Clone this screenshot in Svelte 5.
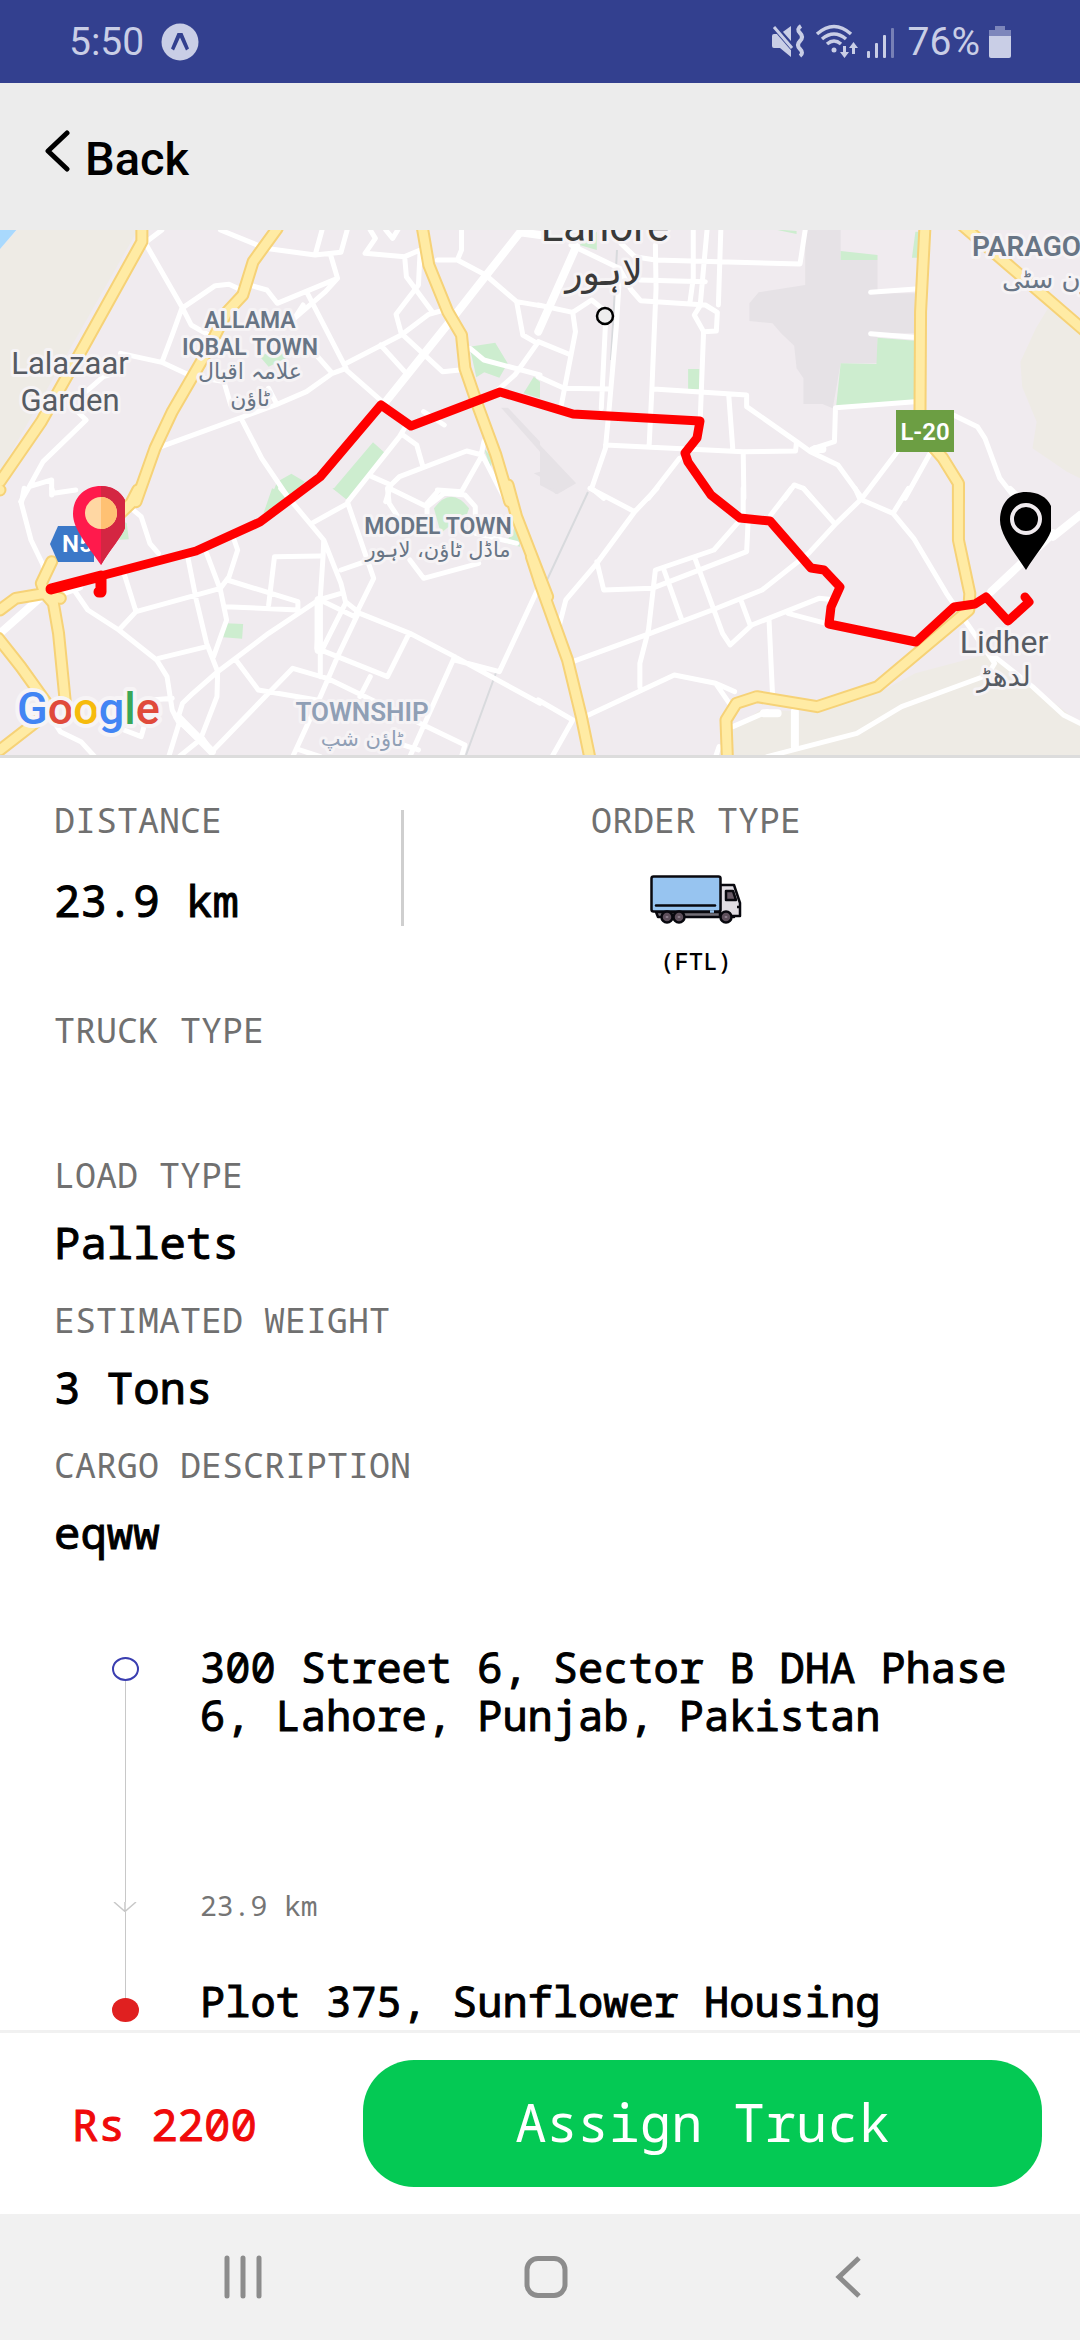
<script>
  // The map is split into four tiles; each tile keeps its shapes in its own units.
  const tiles = [
    {
      x: 0,
      y: -5,
      water: 'M0 0H60L0 72Z',
      sand: 'M50 15H400L0 740V72Z',
      built: 'M1455 548L1475 548L1568 650V680Z M1550 745L1568 740V755Z',
      park: 'M1363 365L1438 353L1474 415L1450 458L1406 442L1383 457L1372 405Z M1550 455L1568 470V520L1520 505Z M1083 652L1117 683L1013 820L968 792Z M785 820L805 770L846 746L885 770L850 820Z M755 395L810 365L830 400L780 425Z M1405 670L1430 700L1425 730Z',
      roads:
        'M425 60L528 245L555 300L640 350 M425 50L470 15 M640 15L770 70L915 90L990 82L1008 15 M915 90L935 15 M960 90L980 160L945 200L855 280 M980 160L805 235L775 195L730 182 M690 190L665 178L625 182L528 250L500 330L470 412L350 385 M470 412L560 455L650 470L670 540 M890 200L1005 430L965 445L890 500L800 540L460 668 M965 445L880 345 M1000 418L1165 330L1245 268L1290 255 M855 280L880 240 M1075 15L1090 40L1060 85L1175 95L1180 155L1255 260 M1120 15L1140 40L1155 15 M1175 95L1220 75L1215 180L1150 268L1165 325L1285 440L1335 435 M1105 360L1175 440 M1270 105L1328 105L1340 75V15 M1328 105L1410 150L1500 230L1568 242 M1500 230L1518 330L1560 355L1495 450L1440 500 M1365 370L1405 405L1568 450 M1000 430L1110 530 M250 500L300 455L350 440 M220 555L250 585L125 710L85 785L150 765V810 M85 785L60 830 M700 580L760 700L845 830 M780 490L800 530 M1180 600L1160 635L1060 765L1010 830 M1170 630L1210 660L1228 725 M1080 755L1135 780L1120 830 M1135 780L1160 755L1355 678L1400 690L1470 830 M1405 650L1395 700L1340 800L1270 795 M1290 600L1230 560',
      wide: 'M1568 30L1510 22L1405 160L1310 285L1120 530',
      major: 'M412 0V50L240 370L120 590L0 770 M805 10L735 110L705 210L660 260L590 400L500 560L450 670L395 830 M1225 0L1245 120L1300 260L1340 330L1350 430L1390 550L1440 690L1480 830'
    },
    {
      x: 540,
      y: -5,
      water: '',
      sand: 'M1475 250L1568 310V760L1530 740L1430 670L1442 590L1400 485L1395 410L1440 310Z',
      built: 'M770 15H873V105H980V205H1090V325H980V415H873L850 550L820 537H765V460L745 430L738 362L700 325L675 295L608 288V235L635 202L770 180Z M0 660L105 775L50 808L0 780Z',
      park: 'M980 338L1088 347V530L860 543L873 415L977 417Z M873 78L980 90V105H873Z M1090 20H1100V98H1080Z M430 432H463V493H430Z M115 60L165 20V75Z M675 12L745 18V27Z',
      roads:
        'M90 60L230 130L265 195L292 227L480 240L515 262L512 318L475 320L448 270L465 242L485 15 M235 55L275 95L335 105L755 117L770 15 M335 60L337 190L325 490L317 660 M445 15V160L435 235 M525 15L518 240 M290 165L480 170 M-5 240L95 262L150 225L180 250 M95 262L103 320L90 390L62 540 M90 390L-5 350 M-5 455L70 490L200 492 M190 300L178 550 M232 130L222 300L200 560L190 670L150 790L185 820 M190 660L590 680L742 678L745 650L600 545V510L330 492 M475 320L465 590 M548 510L560 675 M590 680L592 820 M745 650L785 680L865 720L935 820 M790 672L855 650L858 548L1088 530 M960 202L1090 192 M960 326L1085 337 M1200 570L1270 605L1292 640L1335 760L1380 820 M1045 670L935 820 M1130 690L1060 820 M405 700L315 820 M710 820L738 780L765 790L790 820',
      wide: 'M105 65L-5 320 M800 672L820 672',
      major: 'M1118 0L1105 260L1103 620L1170 700L1215 775V830 M1225 0L1360 120L1590 325'
    },
    {
      x: 0,
      y: 260,
      water: '',
      sand: '',
      built: '',
      park: 'M790 -5L850 20L765 70Z M965 -5L1045 -5L1005 28Z M352 90L368 100L374 148L335 150Z M655 400L706 402L703 446L648 442Z M1260 55Q1310 -15 1362 55L1350 90L1320 95L1280 130Z M1500 100L1510 170L1470 160Z',
      roads:
        'M70 -5L62 40L90 150L125 225L130 270 M150 -5L155 10L220 0 M375 50L410 80L435 160L460 190 M360 250L395 365L345 420L455 510L485 560L500 660L520 700L490 800 M215 300L255 360L345 420 M545 200L570 330L600 460L632 545L560 610L530 640L515 690 M395 365L640 295L665 260L690 180L680 150 M600 190L640 300L658 390L620 500 M460 505L600 470 M632 545L780 430L925 330L990 310 M655 350L865 360V335L660 270 M780 345L797 200L930 198 M815 -5L940 150L938 200L920 475L1125 560L1188 430 M905 100L1010 40L1085 265L1030 380L930 330 M990 240L1060 215 M940 150L990 280L1003 335L1045 370L1190 430L1320 500L1568 640 M930 330V560 M1003 340L935 480 M1040 370L980 500L930 620 M1320 510L1450 545L1565 290 M1320 500L1190 800 M685 510L750 600L920 630 M632 545L630 620L585 740L615 785 M515 690L615 785L850 535L950 565L1240 710 M1075 560L1045 620 M930 620L850 800 M870 780L930 800 M500 625L440 630L410 740L360 720 M160 700L175 725L235 755L275 800 M520 800L580 750 M1125 -5L1130 40L1155 80 M1130 -5L1240 50 M1500 160L1380 130 M1240 50L1290 10L1350 15L1380 50V80 M1190 210L1230 265L1390 220 M1240 70V40L1270 5 M1240 710L1350 765L1340 800 M1170 765L1215 780',
      wide: 'M120 320L0 430 M175 310L230 290 M515 680L615 785 M925 330L925 480',
      major: 'M400 0L380 40L350 70 M150 215L120 280L130 310L45 325L0 360 M130 310L155 340L170 430L190 640 M-5 445L60 530L150 660L0 780 M-5 0L0 0 M1475 -15L1500 80L1590 320 M120 310L175 325'
    },
    {
      x: 540,
      y: 260,
      water: '',
      sand: 'M1290 495L1360 530L1568 700V830H530L560 715L640 660L800 665L980 610L1090 550Z',
      built: 'M30 -5L70 0L45 12Z',
      park: '',
      roads:
        'M145 -5L275 65L165 220L75 330L55 410 M340 -5L275 65 M165 215L185 300L325 295L600 185L605 80 M590 -5V80L505 180L335 240L315 420L290 520V590 M360 240L410 385 M450 205L530 430L552 465L615 405L810 325L860 330 M585 335L610 405 M720 370L830 400 M95 515L320 430L500 360L645 300L780 190L860 100L930 30L915 -5 M765 -5L855 100 M730 -5L670 75 M935 30L1025 70L1070 -5 M1025 70L1085 145L1180 310L1240 400L1320 520L1300 555L1050 650L920 730L660 800 M1320 500L1430 590L1520 675L1568 700 M665 390L675 610 M130 680L390 555L510 580L565 605 M510 580L550 640 M560 710L660 665 M-5 630L95 690L35 800 M520 770L510 800 M1365 -5L1380 10',
      wide: 'M1490 130L1310 305 M1490 140L1568 75 M740 665V770 M650 670H690',
      major: 'M-25 200L0 280L80 510L120 680L150 830 M1215 -15V150L1248 310L1245 360L980 590L805 650L630 620L570 640L540 690L545 830'
    }
  ];

  const route =
    'M51 359L196 321L260 292L320 247L381 175L411 196L500 162L573 184L700 191L697 208L685 223L688 232L711 265L740 288L770 291L811 338L824 340L840 357L831 377L829 394L916 412L954 377L975 374L986 367L1008 391L1029 372L1025 367';

  const labels = [
    { x: 250, y: 98, size: 23, kind: 'area', text: 'ALLAMA' },
    { x: 250, y: 125, size: 23, kind: 'area', text: 'IQBAL TOWN' },
    { x: 250, y: 149, size: 22, kind: 'area urdu', text: 'علامہ اقبال' },
    { x: 250, y: 176, size: 22, kind: 'area urdu', text: 'ٹاؤن' },
    { x: 70, y: 144, size: 31, kind: 'town', text: 'Lalazaar' },
    { x: 70, y: 181, size: 31, kind: 'town', text: 'Garden' },
    { x: 605, y: 11, size: 42, kind: 'city', text: 'Lahore' },
    { x: 604, y: 55, size: 36, kind: 'city urdu', text: 'لاہور' },
    { x: 972, y: 26, size: 28, kind: 'area edge', text: 'PARAGON' },
    { x: 1002, y: 58, size: 26, kind: 'area urdu edge', text: 'پیراگون سٹی' },
    { x: 438, y: 304, size: 23, kind: 'area', text: 'MODEL TOWN' },
    { x: 438, y: 327, size: 21, kind: 'area urdu', text: 'ماڈل ٹاؤن، لاہور' },
    { x: 362, y: 491, size: 26, kind: 'area pale', text: 'TOWNSHIP' },
    { x: 362, y: 516, size: 21, kind: 'area pale urdu', text: 'ٹاؤن شپ' },
    { x: 1004, y: 423, size: 32, kind: 'town', text: 'Lidher' },
    { x: 1004, y: 456, size: 28, kind: 'town urdu', text: 'لدھڑ' }
  ];

  const fields = [
    { label: 'TRUCK TYPE', value: '' },
    { label: 'LOAD TYPE', value: 'Pallets' },
    { label: 'ESTIMATED WEIGHT', value: '3 Tons' },
    { label: 'CARGO DESCRIPTION', value: 'eqww' }
  ];
</script>

{#snippet layer(key, kind)}
  {#each tiles as t}
    {#if t[key]}
      <path class={kind} transform="translate({t.x} {t.y}) scale(.3444 .3333)" d={t[key]} />
    {/if}
  {/each}
{/snippet}

<div class="screen">
  <div class="status">
    <div class="group">
      <span class="clock">5:50</span>
      <svg width="38" height="38" viewBox="0 0 38 38" aria-hidden="true">
        <circle cx="19" cy="19" r="18.5" fill="#c9cee6" />
        <path d="M10 25.5 16.5 10h5L28 25.500l-3 2-6-13-6 13Z" fill="#33408f" />
      </svg>
    </div>
    <div class="group right">
      <svg width="124" height="36" viewBox="0 0 124 36" fill="#c9cee6" aria-hidden="true">
        <path d="M1 12q0-2 2-2h6l11-8v31L9 24H3q-2 0-2-2Z" />
        <path d="M2 1 22 24" stroke="#33408f" stroke-width="6" />
        <path d="M3 3 21 24" stroke="#c9cee6" stroke-width="3" />
        <path d="M30 2q-5 3-1 7t0 8q-4 4 0 8t0 7" fill="none" stroke="#c9cee6" stroke-width="4" />
        <g fill="none" stroke="#c9cee6" stroke-width="3.500">
          <path d="M46 10q17-15 34 0" />
          <path d="M51 15q12-10 24 0" />
          <path d="M56 20q7-6 14 0" />
        </g>
        <circle cx="63" cy="26" r="2.500" />
        <path d="M72 22h3v6h3l-4.500 6-4.500-6h3Z" />
        <path d="M81 30h3v-6h3l-4.500-6-4.500 6h3Z" />
        <rect x="96" y="27" width="3" height="7" rx="1" />
        <rect x="104" y="19" width="3" height="15" rx="1" />
        <rect x="112" y="11" width="3" height="23" rx="1" />
        <rect x="120" y="4" width="3" height="30" rx="1" opacity=".45" />
      </svg>
      <span class="clock percent">76%</span>
      <svg width="22" height="34" viewBox="0 0 22 34" aria-hidden="true">
        <path d="M6 1h10v4h6v8H0V5h6Z" fill="#7d86bb" />
        <path d="M0 11h22v20q0 2-2 2H2q-2 0-2-2Z" fill="#c9cee6" />
      </svg>
    </div>
  </div>

  <header>
    <button class="back" type="button">
      <svg width="26" height="44" viewBox="0 0 26 44" fill="none" stroke="#000" stroke-width="5" stroke-linecap="round" stroke-linejoin="round" aria-hidden="true">
        <path d="M22 4 3 22l19 18" />
      </svg>
      <span>Back</span>
    </button>
  </header>

  <svg class="map" viewBox="0 0 1080 525" role="img" aria-label="Route map of Lahore">
    <rect width="1080" height="525" fill="#f0ebef" />
    {@render layer('sand', 'sand')}
    {@render layer('water', 'water')}
    {@render layer('built', 'built')}
    {@render layer('park', 'park')}
    <path d="M617 20 611 130M588 262 547 350M497 440 466 525" class="rail" />
    {@render layer('roads', 'road')}
    {@render layer('wide', 'road wide')}
    {@render layer('major', 'casing')}
    {@render layer('major', 'major')}

    <circle cx="605" cy="86" r="8" fill="#eee" stroke="#000" stroke-width="2.500" />
    {#each labels as l}
      <text class="label {l.kind}" x={l.x} y={l.y} font-size={l.size}>{l.text}</text>
    {/each}

    <rect x="896" y="180" width="58" height="42" fill="#6c9e43" />
    <text class="shield" x="925" y="210" text-anchor="middle">L-20</text>
    <path d="M50 314 58 296H94V332H58Z" fill="#3b78c8" />
    <text class="shield" x="62" y="322">N5</text>

    <path d={route} class="route" />
    <path d="M51 359 101 346V362L99 362" class="route tail" />

    <path d="M101 256C84 256 73 268 73 284C73 299 88 316 101 335C111 318 121 308 125 298V270C120 261 112 256 101 256Z" fill="#ff1a4c" />
    <path d="M101 256V335C111 318 121 308 125 298V270C120 261 112 256 101 256Z" fill="#d42642" />
    <circle cx="101" cy="283" r="16" fill="#ffd7a3" />
    <path d="M101 267a16 16 0 0 1 0 32Z" fill="#ffc173" />

    <path d="M1026 262C1009 262 1000 275 1000 290C1000 305 1015 323 1026 340C1035 325 1047 312 1051 301V276C1047 267 1038 262 1026 262Z" />
    <circle cx="1026" cy="289" r="14" fill="none" stroke="#f0ebef" stroke-width="4" />

    <text class="brand" x="17" y="494"><tspan fill="#4285f4">G</tspan><tspan fill="#e04a3b">o</tspan><tspan fill="#f6bb0c">o</tspan><tspan fill="#4285f4">g</tspan><tspan fill="#3aa757">l</tspan><tspan fill="#e04a3b">e</tspan></text>
  </svg>

  <main>
    <section class="summary">
      <div class="distance">
        <span class="caption">DISTANCE</span>
        <span class="value">23.9 km</span>
      </div>
      <div class="order">
        <span class="caption">ORDER TYPE</span>
        <svg width="92" height="50" viewBox="0 0 92 50" stroke="#08080e" stroke-width="2.500" stroke-linejoin="round" aria-hidden="true">
          <path d="M6 37H84V42H8Z" fill="#747078" />
          <path d="M70 10H84L90 28V41H70Z" fill="#e1dde3" />
          <path d="M76 16H83L86 25H76Z" fill="#685a66" />
          <path d="M87 32H91" />
          <rect x="1.500" y="1.500" width="69" height="35" rx="2" fill="#97c4f0" />
          <path d="M6 30.500H65" stroke-linecap="round" />
          <path d="M60 36.500H64" stroke="#97c4f0" />
          <circle cx="17" cy="42" r="5.500" fill="#5e505c" />
          <circle cx="29" cy="42" r="5.500" fill="#5e505c" />
          <circle cx="76" cy="42" r="5.500" fill="#5e505c" />
          <path d="M17 41v2M29 41v2M76 41v2" stroke="#8b7d8a" />
        </svg>
        <span class="code">(FTL)</span>
      </div>
    </section>

    <section class="fields">
      {#each fields as f}
        <div class="field">
          <span class="caption">{f.label}</span>
          <span class="value">{f.value}</span>
        </div>
      {/each}
    </section>

    <section class="trip">
      <div class="track">
        <span class="stop from"></span>
        <span class="line first"></span>
        <svg width="24" height="10" viewBox="0 0 24 10" fill="none" stroke="#c8c8c8" stroke-width="1.500" aria-hidden="true">
          <path d="M1 0 12 9.500 23 0M12 0V10" />
        </svg>
        <span class="line"></span>
        <span class="stop to"></span>
      </div>
      <div class="stops">
        <p class="address start">300 Street 6, Sector B DHA Phase 6, Lahore, Punjab, Pakistan</p>
        <p class="leg">23.9 km</p>
        <p class="address">Plot 375, Sunflower Housing</p>
      </div>
    </section>
  </main>

  <footer>
    <span class="price">Rs 2200</span>
    <button class="assign" type="button">Assign Truck</button>
  </footer>

  <nav>
    <button type="button" aria-label="Recent apps">
      <svg width="44" height="44" viewBox="0 0 44 44" stroke="#8c8c8c" stroke-width="5" aria-hidden="true"><path d="M6 3v38M22 3v38M38 3v38" stroke-linecap="round" /></svg>
    </button>
    <button type="button" aria-label="Home">
      <svg width="44" height="44" viewBox="0 0 44 44" fill="none" stroke="#8c8c8c" stroke-width="5" aria-hidden="true"><rect x="3" y="3.500" width="38" height="37" rx="11" /></svg>
    </button>
    <button type="button" aria-label="Back">
      <svg width="44" height="44" viewBox="0 0 44 44" fill="none" stroke="#8c8c8c" stroke-width="5" aria-hidden="true"><path d="M33 3 13 22l20 19" /></svg>
    </button>
  </nav>
</div>

<style>
  :global(body) {
    margin: 0;
    background: #fff;
  }
  .screen {
    display: flex;
    flex-direction: column;
    height: 100vh;
    color: #000;
    font-family: 'Noto Sans Mono', 'Droid Sans Mono', 'DejaVu Sans Mono', monospace;
  }
  button {
    border: 0;
    padding: 0;
    background: none;
    color: inherit;
    font: inherit;
  }
  svg {
    display: block;
    flex: none;
  }
  .status {
    display: flex;
    flex: none;
    align-items: center;
    justify-content: space-between;
    box-sizing: border-box;
    height: 83px;
    padding: 0 69px;
    background: #33408f;
    color: #c9cee6;
    font-family: Roboto, sans-serif;
  }
  .group {
    display: flex;
    align-items: center;
    gap: 17px;
  }
  .right {
    gap: 9px;
  }
  .clock {
    font-size: 39px;
    line-height: 48px;
  }
  .percent {
    padding-left: 4px;
  }
  header {
    display: flex;
    flex: none;
    align-items: center;
    height: 147px;
    padding: 4px 45px 0;
    box-sizing: border-box;
    background: #ececec;
  }
  .back {
    display: flex;
    align-items: center;
    gap: 14px;
    font: 500 47px/56px Roboto, sans-serif;
  }
  .back svg {
    margin-bottom: 16px;
  }
  .map {
    width: 100%;
    height: auto;
    border-bottom: 3px solid #dcdcdc;
  }
  .map path {
    vector-effect: non-scaling-stroke;
  }
  .water { fill: #a9d9fd; }
  .sand { fill: #eeebe5; }
  .built { fill: #e6e2e6; }
  .park { fill: #cdedcf; }
  .rail {
    fill: none;
    stroke: #d8dadd;
    stroke-width: 2;
  }
  .road,
  .casing,
  .major,
  .route {
    fill: none;
    stroke-linejoin: round;
    stroke-linecap: round;
  }
  .road {
    stroke: #fff;
    stroke-width: 5;
  }
  .wide { stroke-width: 8; }
  .casing {
    stroke: #f6d277;
    stroke-width: 13;
  }
  .major {
    stroke: #ffeba4;
    stroke-width: 9;
  }
  .route {
    stroke: #f00;
    stroke-width: 9;
  }
  .tail { stroke-width: 11; }
  .label {
    font-family: Roboto, sans-serif;
    text-anchor: middle;
    paint-order: stroke;
    stroke: #f6f3f5;
    stroke-width: 6px;
    stroke-linejoin: round;
  }
  .area {
    font-weight: 600;
    fill: #687585;
  }
  .pale { fill: #909fb5; }
  .town { fill: #565b63; }
  .city { fill: #3a3a3a; }
  .urdu {
    font-family: 'DejaVu Sans', sans-serif;
    font-weight: 400;
  }
  .edge { text-anchor: start; }
  .shield {
    font: 600 24px Roboto, sans-serif;
    fill: #fff;
  }
  .brand {
    font: 500 45px Roboto, sans-serif;
    paint-order: stroke;
    stroke: #f7f4f6;
    stroke-width: 8px;
    stroke-linejoin: round;
  }
  main {
    display: flex;
    flex: 1;
    flex-direction: column;
    min-height: 0;
    overflow: hidden;
    padding: 38px 54px 0;
  }
  .summary {
    display: grid;
    grid-template-columns: 350px 1fr;
    flex: none;
    margin-bottom: 29px;
  }
  .distance {
    display: flex;
    flex-direction: column;
    gap: 26px;
    align-self: start;
    box-sizing: border-box;
    height: 130px;
    background: linear-gradient(#cfcfcf, #cfcfcf) right bottom / 3px 116px no-repeat;
  }
  .order {
    display: flex;
    flex-direction: column;
    align-items: center;
    padding-right: 38px;
  }
  .order svg {
    margin: 31px 0 20px;
  }
  .caption {
    color: #707070;
    font-size: 35px;
    line-height: 48px;
  }
  .value {
    min-height: 60px;
    font-size: 44px;
    line-height: 60px;
    -webkit-text-stroke: 1px #000;
  }
  .code {
    font-size: 24px;
    line-height: 32px;
    font-weight: 500;
  }
  .fields {
    display: flex;
    flex: none;
    flex-direction: column;
    gap: 24px;
  }
  .field {
    display: flex;
    flex-direction: column;
    gap: 13px;
  }
  .trip {
    display: flex;
    flex: none;
    gap: 62px;
    margin-top: 81px;
    padding-left: 58px;
  }
  .track {
    display: flex;
    flex-direction: column;
    align-items: center;
    width: 26px;
    padding: 14px 0 3px;
  }
  .stop {
    box-sizing: border-box;
    width: 27px;
    height: 24px;
    border-radius: 50%;
  }
  .from { border: 2px solid #3a3eb0; }
  .to { background: #e02020; }
  .line {
    flex: 1;
    width: 1px;
    background: #c8c8c8;
  }
  .first { flex: 0 0 221px; }
  .stops {
    flex: 1;
  }
  p { margin: 0; }
  .address {
    font-size: 42px;
    line-height: 48px;
    -webkit-text-stroke: 1px #000;
  }
  .start { margin-bottom: 148px; }
  .leg {
    margin-bottom: 54px;
    color: #757575;
    font-size: 28px;
    line-height: 36px;
  }
  footer {
    display: flex;
    flex: none;
    align-items: center;
    gap: 106px;
    padding: 27px 38px 27px 72px;
    border-top: 3px solid #f1f1f1;
    background: #fff;
  }
  .price {
    color: #f00a0a;
    font-size: 44px;
    line-height: 60px;
    -webkit-text-stroke: 1px #f00a0a;
  }
  .assign {
    flex: 1;
    height: 127px;
    padding-bottom: 5px;
    border-radius: 51px;
    background: #04c954;
    color: #fff;
    font-size: 52px;
  }
  nav {
    display: flex;
    flex: none;
    justify-content: space-between;
    align-items: center;
    height: 126px;
    padding: 0 210px 0 221px;
    background: #f1f1f1;
  }
</style>
